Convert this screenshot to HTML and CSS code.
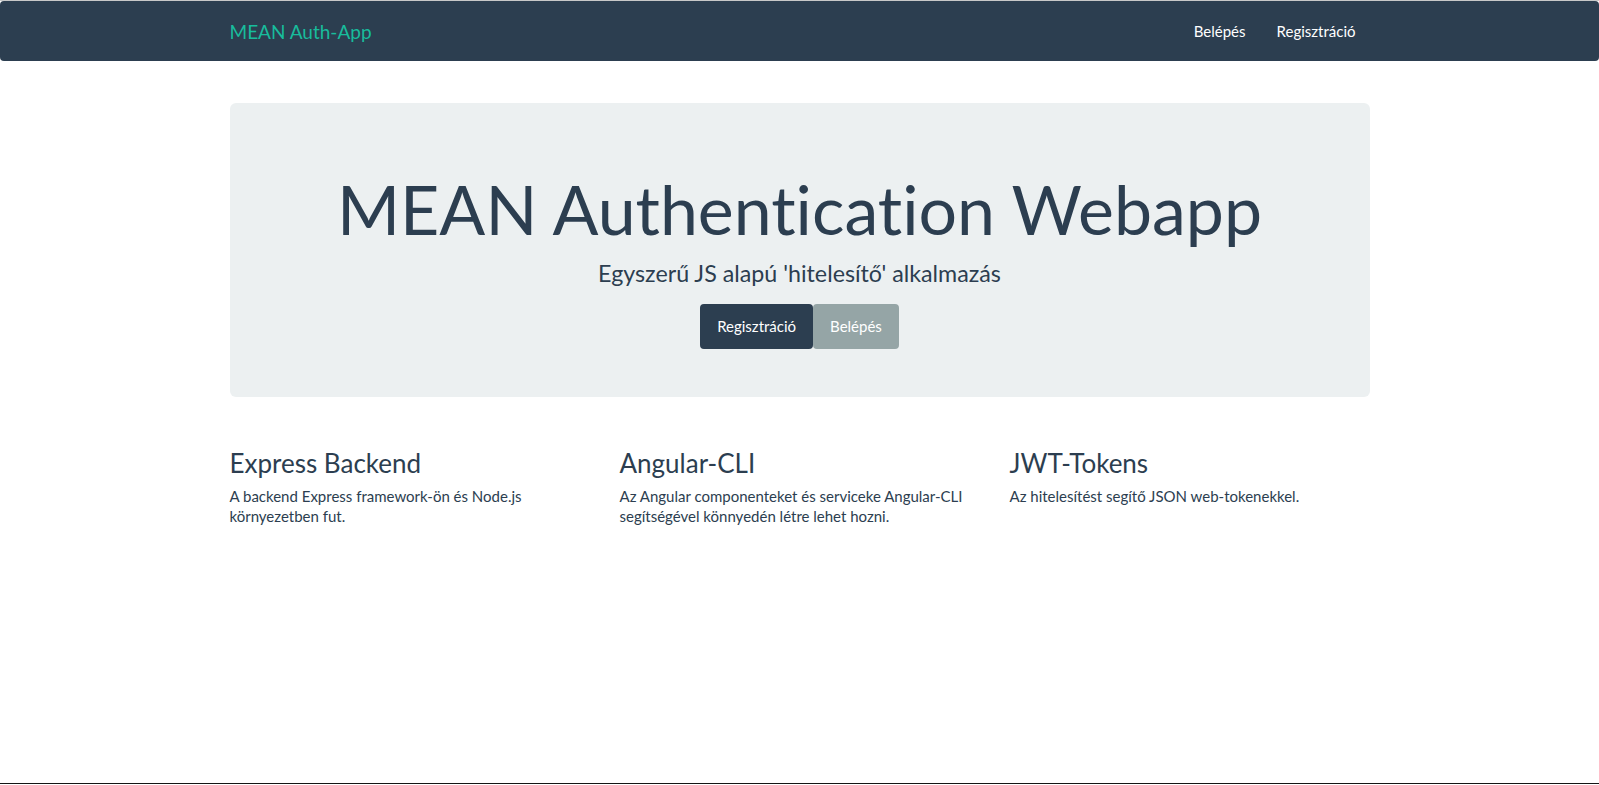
FILE: index.html
```html
<!DOCTYPE html>
<html lang="hu">
<head>
<meta charset="utf-8">
<title>MEAN Auth-App</title>
<link rel="stylesheet" href="styles.css">
</head>
<body>
<div class="page">
  <nav class="navbar">
    <div class="container nav-inner">
      <a class="brand" href="#">MEAN Auth-App</a>
      <ul class="nav-links">
        <li><a href="#">Belépés</a></li>
        <li><a href="#">Regisztráció</a></li>
      </ul>
    </div>
  </nav>
  <main class="container main">
    <section class="jumbotron">
      <h1 class="jumbo-title">MEAN Authentication Webapp</h1>
      <p class="jumbo-lead">Egyszerű JS alapú 'hitelesítő' alkalmazás</p>
      <div class="jumbo-actions"><a class="btn btn-primary" href="#">Regisztráció</a><a class="btn btn-default" href="#">Belépés</a></div>
    </section>
    <div class="features">
      <div class="feature">
        <h3 class="feature-title">Express Backend</h3>
        <p class="feature-text">A backend Express framework-ön és Node.js környezetben fut.</p>
      </div>
      <div class="feature">
        <h3 class="feature-title">Angular-CLI</h3>
        <p class="feature-text">Az Angular componenteket és serviceke Angular-CLI segítségével könnyedén létre lehet hozni.</p>
      </div>
      <div class="feature">
        <h3 class="feature-title">JWT-Tokens</h3>
        <p class="feature-text">Az hitelesítést segítő JSON web-tokenekkel.</p>
      </div>
    </div>
  </main>
</div>
</body>
</html>
```
FILE: styles.css
```css
* { box-sizing: border-box; }
html, body { margin: 0; padding: 0; }
body {
  font-family: Lato, "Open Sans", "Liberation Sans", sans-serif;
  font-size: 15px;
  line-height: 1.428571;
  color: #2c3e50;
  background: #fff;
  font-variant-ligatures: no-common-ligatures;
  font-feature-settings: "liga" 0, "clig" 0;
}
.page {
  min-height: 784px;
  border-top: 1px solid #c8c8c8;
  border-bottom: 1px solid #151515;
}
a { text-decoration: none; }
.container {
  width: 1170px;
  margin: 0 auto;
  padding: 0 15px;
}
.navbar {
  height: 60px;
  background: #2c3e50;
  border-radius: 4px;
}
.nav-inner {
  height: 100%;
  display: flex;
  align-items: center;
  justify-content: space-between;
}
.brand {
  color: #18bc9c;
  font-size: 19px;
  line-height: 21px;
}
.nav-links {
  list-style: none;
  margin: 0;
  padding: 0;
  display: flex;
}
.nav-links a {
  display: block;
  color: #fff;
  padding: 0 15px;
  line-height: 21px;
}
.nav-links li:first-child a { padding-left: 14px; }
.nav-links li:last-child a { padding-left: 16px; padding-right: 14px; }
.main { padding-top: 42px; }
.jumbotron {
  background: #ecf0f1;
  border-radius: 6px;
  padding: 48px 60px 48px;
  text-align: center;
  margin-bottom: 30px;
}
.jumbo-title {
  margin: 21px 0 10.5px;
  font-size: 68px;
  font-weight: 400;
  line-height: 1.1;
}
.jumbo-lead {
  margin: 0 0 15px;
  font-size: 23.25px;
  line-height: 32px;
}
.jumbo-actions {
  display: flex;
  justify-content: center;
}
.btn {
  display: inline-block;
  padding: 10px 15px;
  border: 2px solid transparent;
  border-radius: 4px;
  color: #fff;
  font-size: 15px;
  line-height: 21px;
}
.btn-primary { background: #2c3e50; border-color: #2c3e50; }
.btn-default { background: #95a5a6; border-color: #95a5a6; }
.features {
  display: grid;
  grid-template-columns: repeat(3, 1fr);
  margin: 0 -15px;
}
.feature { padding: 0 15px; }
.feature-title {
  margin: 22px 0 8.5px;
  font-size: 26px;
  font-weight: 400;
  line-height: 1.1;
}
.feature-text {
  margin: 0 0 10.5px;
  font-size: 15px;
  line-height: 20px;
}
```
